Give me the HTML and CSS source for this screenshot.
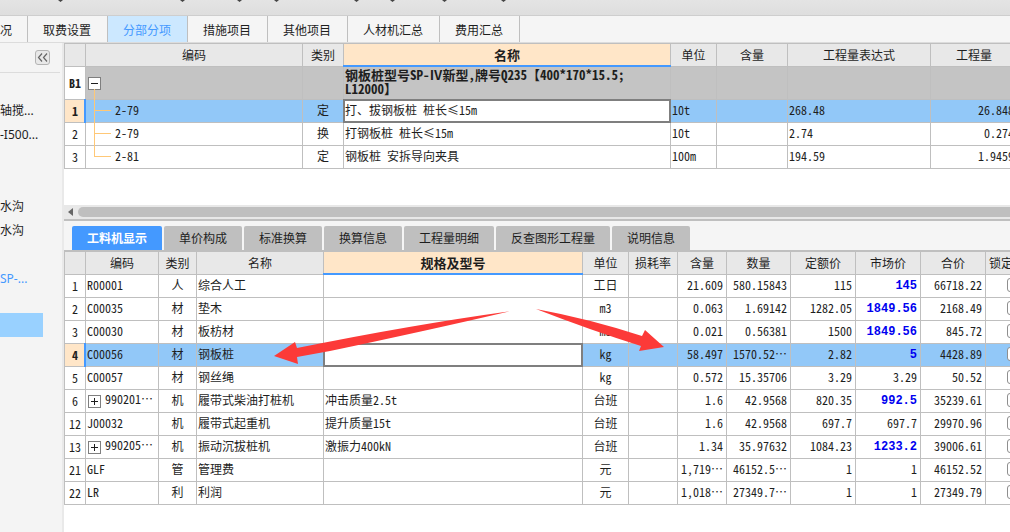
FILE: index.html
```html
<!DOCTYPE html>
<html lang="zh-CN">
<head>
<meta charset="utf-8">
<title>分部分项</title>
<link rel="stylesheet" href="styles.css">
</head>
<body>
<header class="toolbar">
  <svg width="520" height="3" viewBox="0 0 520 3" aria-hidden="true"><path d="M58 0h5l-2.500 2zM180 0h5l-2.500 2zM237 0h5l-2.500 2zM274 0h5l-2.500 2zM354 0h5l-2.500 2zM390 0h5l-2.500 2zM442 0h5l-2.500 2zM501 0h5l-2.500 2z" fill="#444"/></svg>
</header>
<nav class="main-tabs">
  <button class="main-tab main-tab-first">况</button>
  <button class="main-tab">取费设置</button>
  <button class="main-tab main-tab-active">分部分项</button>
  <button class="main-tab">措施项目</button>
  <button class="main-tab">其他项目</button>
  <button class="main-tab">人材机汇总</button>
  <button class="main-tab">费用汇总</button>
</nav>
<div class="workspace">
  <aside class="sidebar">
    <div class="sidebar-head">
      <button class="collapse" aria-label="收起"><svg width="11" height="9" viewBox="0 0 11 9" fill="none" stroke="#666" stroke-width="1.200"><path d="M5 .5 1.500 4.500 5 8.500M10 .5 6.500 4.500 10 8.500"/></svg></button>
    </div>
    <ul class="tree">
      <li>轴搅...</li>
      <li>-I500...</li>
      <li></li>
      <li></li>
      <li>水沟</li>
      <li>水沟</li>
      <li></li>
      <li class="link">SP-...</li>
      <li></li>
      <li class="chosen"></li>
    </ul>
  </aside>
  <main class="content">
    <section class="upper">
      <table class="grid grid-items">
        <colgroup><col class="w21"><col class="w217"><col class="w41"><col><col class="w46"><col class="w71"><col class="w143"><col class="w87"></colgroup>
        <thead>
          <tr><th></th><th>编码</th><th>类别</th><th class="current-col">名称</th><th>单位</th><th>含量</th><th>工程量表达式</th><th>工程量</th></tr>
        </thead>
        <tbody>
          <tr class="group"><td class="no">B1</td><td class="code"><button class="fold fold-open" aria-label="折叠"></button></td><td></td><td class="group-name">钢板桩型号SP-<span class="wide">Ⅳ</span>新型,牌号Q235【400*170*15.5;<br>L12000】</td><td></td><td></td><td></td><td></td></tr>
          <tr class="selected"><td class="no">1</td><td class="branch">2-79</td><td class="mid">定</td><td class="editing">打、拔钢板桩 桩长≤15m</td><td>10t</td><td></td><td>268.48</td><td class="num">26.848</td></tr>
          <tr><td class="no">2</td><td class="branch">2-79</td><td class="mid">换</td><td>打钢板桩 桩长≤15m</td><td>10t</td><td></td><td>2.74</td><td class="num">0.274</td></tr>
          <tr><td class="no">3</td><td class="branch branch-last">2-81</td><td class="mid">定</td><td>钢板桩 安拆导向夹具</td><td>100m</td><td></td><td>194.59</td><td class="num">1.9459</td></tr>
        </tbody>
      </table>
    </section>
    <div class="scrollbar">
      <svg width="14" height="14" viewBox="0 0 14 14" aria-hidden="true"><path d="M9 3v8L4 7z" fill="#666"/></svg>
      <div class="thumb"></div>
    </div>
    <section class="lower">
      <nav class="sub-tabs">
        <button class="sub-tab sub-tab-active">工料机显示</button>
        <button class="sub-tab">单价构成</button>
        <button class="sub-tab">标准换算</button>
        <button class="sub-tab">换算信息</button>
        <button class="sub-tab">工程量明细</button>
        <button class="sub-tab">反查图形工程量</button>
        <button class="sub-tab">说明信息</button>
      </nav>
      <table class="grid grid-materials">
        <colgroup><col class="w21"><col class="w73"><col class="w38"><col class="w127"><col><col class="w46"><col class="w49"><col class="w49"><col class="w64"><col class="w65"><col class="w65"><col class="w65"><col class="w56"></colgroup>
        <thead>
          <tr><th></th><th>编码</th><th>类别</th><th>名称</th><th class="current-col">规格及型号</th><th>单位</th><th>损耗率</th><th>含量</th><th>数量</th><th>定额价</th><th>市场价</th><th>合价</th><th class="lock-head">锁定</th></tr>
        </thead>
        <tbody>
          <tr><td class="no">1</td><td>R00001</td><td class="mid">人</td><td>综合人工</td><td></td><td class="mid">工日</td><td></td><td class="num">21.609</td><td class="num">580.15843</td><td class="num">115</td><td class="num changed">145</td><td class="num">66718.22</td><td class="lock"><input type="checkbox" aria-label="锁定"></td></tr>
          <tr><td class="no">2</td><td>C00035</td><td class="mid">材</td><td>垫木</td><td></td><td class="mid">m3</td><td></td><td class="num">0.063</td><td class="num">1.69142</td><td class="num">1282.05</td><td class="num changed">1849.56</td><td class="num">2168.49</td><td class="lock"><input type="checkbox" aria-label="锁定"></td></tr>
          <tr><td class="no">3</td><td>C00030</td><td class="mid">材</td><td>板枋材</td><td></td><td class="mid">m3</td><td></td><td class="num">0.021</td><td class="num">0.56381</td><td class="num">1500</td><td class="num changed">1849.56</td><td class="num">845.72</td><td class="lock"><input type="checkbox" aria-label="锁定"></td></tr>
          <tr class="selected"><td class="no">4</td><td>C00056</td><td class="mid">材</td><td>钢板桩</td><td class="editing"></td><td class="mid">kg</td><td></td><td class="num">58.497</td><td class="num">1570.52…</td><td class="num">2.82</td><td class="num changed">5</td><td class="num">4428.89</td><td class="lock"><input type="checkbox" aria-label="锁定"></td></tr>
          <tr><td class="no">5</td><td>C00057</td><td class="mid">材</td><td>钢丝绳</td><td></td><td class="mid">kg</td><td></td><td class="num">0.572</td><td class="num">15.35706</td><td class="num">3.29</td><td class="num">3.29</td><td class="num">50.52</td><td class="lock"><input type="checkbox" aria-label="锁定"></td></tr>
          <tr><td class="no">6</td><td class="code"><button class="fold" aria-label="展开"></button>990201…</td><td class="mid">机</td><td>履带式柴油打桩机</td><td>冲击质量2.5t</td><td class="mid">台班</td><td></td><td class="num">1.6</td><td class="num">42.9568</td><td class="num">820.35</td><td class="num changed">992.5</td><td class="num">35239.61</td><td class="lock"><input type="checkbox" aria-label="锁定"></td></tr>
          <tr><td class="no">12</td><td>J00032</td><td class="mid">机</td><td>履带式起重机</td><td>提升质量15t</td><td class="mid">台班</td><td></td><td class="num">1.6</td><td class="num">42.9568</td><td class="num">697.7</td><td class="num">697.7</td><td class="num">29970.96</td><td class="lock"><input type="checkbox" aria-label="锁定"></td></tr>
          <tr><td class="no">13</td><td class="code"><button class="fold" aria-label="展开"></button>990205…</td><td class="mid">机</td><td>振动沉拔桩机</td><td>激振力400kN</td><td class="mid">台班</td><td></td><td class="num">1.34</td><td class="num">35.97632</td><td class="num">1084.23</td><td class="num changed">1233.2</td><td class="num">39006.61</td><td class="lock"><input type="checkbox" aria-label="锁定"></td></tr>
          <tr><td class="no">21</td><td>GLF</td><td class="mid">管</td><td>管理费</td><td></td><td class="mid">元</td><td></td><td class="num">1,719…</td><td class="num">46152.5…</td><td class="num">1</td><td class="num">1</td><td class="num">46152.52</td><td class="lock"><input type="checkbox" aria-label="锁定"></td></tr>
          <tr><td class="no">22</td><td>LR</td><td class="mid">利</td><td>利润</td><td></td><td class="mid">元</td><td></td><td class="num">1,018…</td><td class="num">27349.7…</td><td class="num">1</td><td class="num">1</td><td class="num">27349.79</td><td class="lock"><input type="checkbox" aria-label="锁定"></td></tr>
        </tbody>
      </table>
      <svg class="arrows" width="392" height="56" viewBox="273 309 392 56" aria-hidden="true"><path d="M274 356 295 342 297 348Q410 325 511 311 430 330 330 351L297 357 298 364zM536 309Q590 319 642 336L645 330 664 347 639 351 641 346Q590 330 536 309z" fill="#fc3a38"/></svg>
    </section>
  </main>
</div>
</body>
</html>
```
FILE: styles.css
```css
* { box-sizing: border-box; }

body {
  margin: 0;
  min-height: 100vh;
  display: flex;
  flex-direction: column;
  overflow: hidden;
  background: #f5f5f5;
  color: #1e1e1e;
  font: 12px/16px "Noto Sans", "Noto Sans CJK SC", sans-serif;
}

button {
  font: inherit;
  color: inherit;
  border: 0;
  padding: 0;
  margin: 0;
}

.toolbar {
  height: 16px;
  background: linear-gradient(#e4e4e4, #dedede);
  border-bottom: 1px solid #cecece;
}

.toolbar svg { display: block; }

/* Main tabs */
.main-tabs {
  display: flex;
  height: 27px;
  border-bottom: 1px solid #dcdcdc;
  background: #f5f5f5;
}

.main-tab {
  padding: 4px 16px 0 15px;
  background: #f5f5f5;
  border-right: 1px solid #bfbfbf;
  white-space: nowrap;
}

.main-tab-first { padding: 4px 15px 0 0; }

.main-tab-active {
  background: #cce8ff;
  color: #4499ff;
}

.workspace {
  flex: 1;
  display: flex;
}

/* Sidebar */
.sidebar {
  flex: 0 0 64px;
  background: #f4f4f4;
  border-right: 2px solid #e9e9e9;
}

.sidebar-head {
  display: flex;
  justify-content: flex-end;
  height: 30px;
  margin-right: 2px;
  padding: 7px 10px 0 0;
  border-bottom: 1px solid #dcdcdc;
}

.collapse {
  display: flex;
  align-items: center;
  justify-content: center;
  width: 15px;
  height: 15px;
  background: #e8e8e8;
  border: 1px solid #b4b4b4;
  border-radius: 3px;
}

.tree {
  list-style: none;
  margin: 24px 0 0;
  padding: 0;
}

.tree li {
  height: 24px;
  line-height: 28px;
  white-space: nowrap;
}

.tree .link { color: #4499ff; }

.tree .chosen {
  background: #99d1ff;
  margin-right: 19px;
}

/* Content */
.content {
  flex: 1;
  min-width: 0;
  display: flex;
  flex-direction: column;
  overflow: hidden;
  background: #fff;
}

.upper { padding-bottom: 36px; }

.grid {
  table-layout: fixed;
  border-collapse: separate;
  border-spacing: 0;
  border: 0 solid #bfbfbf;
  border-width: 1px 0 0 1px;
  font-family: "Noto Sans Mono CJK SC", "Liberation Serif", "Noto Sans CJK SC", sans-serif;
}

.grid-items { width: calc(100% + 8px); }

.grid-materials {
  width: calc(100% + 32px);
  border-top-width: 2px;
}

.w21 { width: 21px; }
.w38 { width: 38px; }
.w41 { width: 41px; }
.w46 { width: 46px; }
.w49 { width: 49px; }
.w56 { width: 56px; }
.w64 { width: 64px; }
.w65 { width: 65px; }
.w71 { width: 71px; }
.w73 { width: 73px; }
.w87 { width: 87px; }
.w127 { width: 127px; }
.w143 { width: 143px; }
.w217 { width: 217px; }

.grid th,
.grid td {
  position: relative;
  height: 23px;
  padding: 0 1px 2px;
  border: 0 solid #bfbfbf;
  border-width: 0 1px 1px 0;
  white-space: nowrap;
  text-align: left;
}

.grid th {
  padding: 0;
  background: #e8e8e8;
  font-weight: normal;
  text-align: center;
}

.grid .current-col {
  background: #ffe6c8;
  font-size: 13px;
  font-weight: bold;
}

.current-col::after {
  content: "";
  position: absolute;
  inset: auto -1px -1px;
  height: 2px;
  background: #4499ff;
}

.grid .lock-head {
  padding-left: 3px;
  text-align: left;
}

.grid .no {
  padding: 0;
  text-align: center;
}

.grid .mid { text-align: center; }

.grid .num {
  padding-right: 3px;
  text-align: right;
}

.grid .changed {
  padding-bottom: 0;
  color: #0000f0;
  font-family: "Liberation Mono", monospace;
  font-weight: bold;
}

.selected td { background: #92c8f8; }

.selected .no {
  background: #ffe6c8;
  font-weight: bold;
}

.selected .no::after {
  content: "";
  position: absolute;
  inset: -1px -1px -1px auto;
  width: 2px;
  background: #4499ff;
}

.selected .editing { background: #fff; }

.editing::after {
  content: "";
  position: absolute;
  inset: -1px;
  border: 2px solid #7f7f7f;
}

.grid .group td {
  height: 33px;
  background: #c4c4c4;
}

.grid .group .no {
  background: #fff;
  font-weight: bold;
}

.grid .group-name {
  font-size: 13px;
  font-weight: bold;
  line-height: 14px;
}

.wide { font-family: "Noto Sans CJK SC", sans-serif; }

/* Tree guides in the code column */
.grid .code {
  padding-left: 2px;
  padding-bottom: 3px;
}

.fold {
  display: inline-block;
  vertical-align: middle;
  width: 13px;
  height: 13px;
  margin-right: 4px;
  border: 1px solid #7f7f7f;
  background:
    linear-gradient(#1e1e1e, #1e1e1e) center / 7px 1px no-repeat,
    linear-gradient(#1e1e1e, #1e1e1e) center / 1px 7px no-repeat,
    #fff;
}

.fold-open {
  background: linear-gradient(#1e1e1e, #1e1e1e) center / 7px 1px no-repeat, #fff;
}

.grid .branch { padding-left: 29px; }

.branch::before {
  content: "";
  position: absolute;
  left: 8px;
  top: -1px;
  bottom: 0;
  width: 1px;
  background: #ffc877;
}

.group + .selected .branch::before { top: -11px; }

.branch-last::before { bottom: 11px; }

.branch::after {
  content: "";
  position: absolute;
  left: 8px;
  top: 10px;
  width: 17px;
  height: 1px;
  background: #ffc877;
}

/* Scrollbar between the grids */
.scrollbar {
  display: flex;
  height: 16px;
  background: #e8e8e8;
  border-bottom: 2px solid #bfbfbf;
}

.thumb {
  flex: 1;
  height: 10px;
  margin: 2px 0;
  border-radius: 5px 0 0 5px;
  background: #bfbfbf;
}

/* Lower pane */
.lower { position: relative; }

.sub-tabs {
  display: flex;
  gap: 2px;
  padding: 5px 8px 0;
  background: #f5f5f5;
}

.sub-tab {
  height: 24px;
  padding: 2px 15px 0;
  border-radius: 2px 2px 0 0;
  background: #bfbfbf;
  white-space: nowrap;
}

.sub-tab-active {
  background: #4499ff;
  color: #fff;
  font-weight: bold;
}

.lock { overflow: hidden; }

.lock input {
  appearance: none;
  display: block;
  width: 14px;
  height: 14px;
  margin: 0 auto;
  border: 1px solid #8f8f8f;
  border-radius: 3px;
  background: #fff;
}

/* Callout arrows drawn across the material rows */
.arrows {
  position: absolute;
  left: 209px;
  top: 88px;
  pointer-events: none;
}
```
